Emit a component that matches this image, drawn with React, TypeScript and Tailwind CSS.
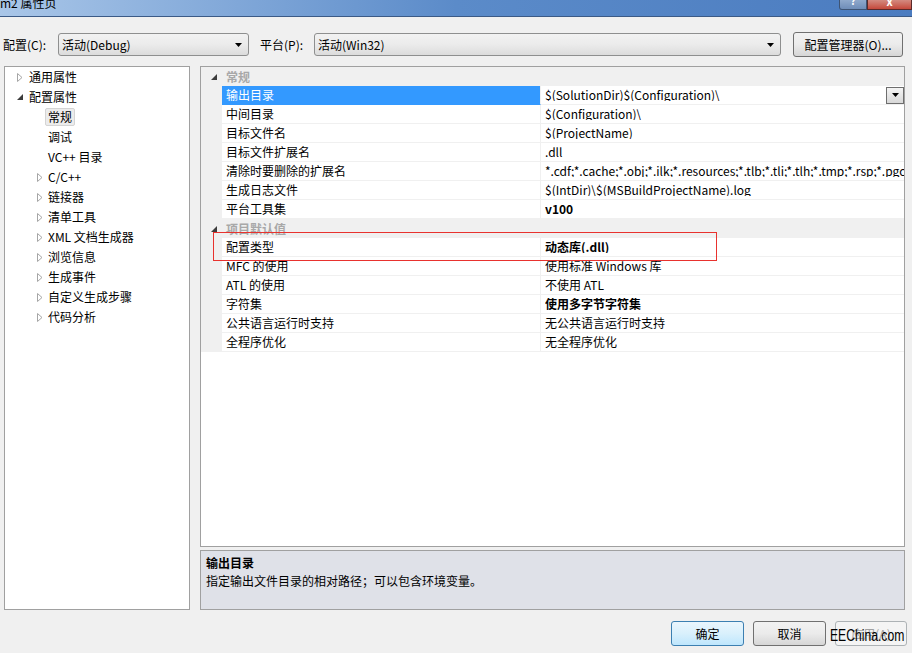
import React from "react";

const treeItems = [
  { label: "通用属性", level: 0, state: "closed" },
  { label: "配置属性", level: 0, state: "open" },
  { label: "常规", level: 1, state: "none", selected: true },
  { label: "调试", level: 1, state: "none" },
  { label: "VC++ 目录", level: 1, state: "none" },
  { label: "C/C++", level: 1, state: "closed" },
  { label: "链接器", level: 1, state: "closed" },
  { label: "清单工具", level: 1, state: "closed" },
  { label: "XML 文档生成器", level: 1, state: "closed" },
  { label: "浏览信息", level: 1, state: "closed" },
  { label: "生成事件", level: 1, state: "closed" },
  { label: "自定义生成步骤", level: 1, state: "closed" },
  { label: "代码分析", level: 1, state: "closed" },
];

type Row =
  | { kind: "cat"; name: string }
  | { kind: "prop"; name: string; value: string; bold?: boolean; active?: boolean };

const gridRows: Row[] = [
  { kind: "cat", name: "常规" },
  { kind: "prop", name: "输出目录", value: "$(SolutionDir)$(Configuration)\\", active: true },
  { kind: "prop", name: "中间目录", value: "$(Configuration)\\" },
  { kind: "prop", name: "目标文件名", value: "$(ProjectName)" },
  { kind: "prop", name: "目标文件扩展名", value: ".dll" },
  {
    kind: "prop",
    name: "清除时要删除的扩展名",
    value: "*.cdf;*.cache;*.obj;*.ilk;*.resources;*.tlb;*.tli;*.tlh;*.tmp;*.rsp;*.pgc;*.pgd;*.meta;$(TargetPath)",
  },
  { kind: "prop", name: "生成日志文件", value: "$(IntDir)\\$(MSBuildProjectName).log" },
  { kind: "prop", name: "平台工具集", value: "v100", bold: true },
  { kind: "cat", name: "项目默认值" },
  { kind: "prop", name: "配置类型", value: "动态库(.dll)", bold: true },
  { kind: "prop", name: "MFC 的使用", value: "使用标准 Windows 库" },
  { kind: "prop", name: "ATL 的使用", value: "不使用 ATL" },
  { kind: "prop", name: "字符集", value: "使用多字节字符集", bold: true },
  { kind: "prop", name: "公共语言运行时支持", value: "无公共语言运行时支持" },
  { kind: "prop", name: "全程序优化", value: "无全程序优化" },
];

function ClosedArrow() {
  return (
    <svg width="6" height="9" viewBox="0 0 6 9">
      <polygon points="0.5,0.5 5,4.5 0.5,8.5" fill="white" stroke="#a6a6a6" />
    </svg>
  );
}

function OpenArrow() {
  return (
    <svg width="6" height="6" viewBox="0 0 6 6">
      <polygon points="6,0 6,6 0,6" fill="#3c3c3c" />
    </svg>
  );
}

function DownArrow() {
  return (
    <svg width="7" height="4" viewBox="0 0 7 4">
      <polygon points="0,0 7,0 3.5,4" fill="#000" />
    </svg>
  );
}

function Combo({ text, width }: { text: string; width: string }) {
  return (
    <div
      className={`${width} h-[23px] flex items-center justify-between rounded-[3px] border border-[#8e8f8f] bg-gradient-to-b from-[#f2f2f2] via-[#ebebeb] to-[#dcdcdc] pl-[3px] pr-[6px]`}
    >
      <span>{text}</span>
      <DownArrow />
    </div>
  );
}

export default function App() {
  return (
    <div
      className="relative w-[912px] h-[653px] overflow-hidden bg-[#f0f0f0] text-[12px] text-black leading-none"
      style={{ fontFamily: '"Noto Sans CJK SC", "Noto Sans", sans-serif' }}
    >
      {/* title bar */}
      <div className="h-[17px] flex items-start justify-between bg-gradient-to-r from-[#a9c6e8] via-[#5b8bc9] to-[#4b7cc0] border-b border-[#3b5a86]">
        <div className="-mt-[3px] text-[12px] text-black">m2 属性页</div>
        <div className="flex">
          <div className="w-[28px] h-[10px] rounded-bl-[3px] border border-t-0 border-[#3e5474] bg-gradient-to-b from-[#8fa9cc] to-[#6f8db8] flex items-start justify-center text-white text-[10px] font-bold">
            <span className="-mt-[4px]">?</span>
          </div>
          <div className="w-[45px] h-[10px] border border-t-0 border-[#5a2a2a] bg-gradient-to-b from-[#d38a80] to-[#c4473b] flex items-start justify-center text-white text-[11px] font-bold">
            <span className="-mt-[4px]">x</span>
          </div>
        </div>
      </div>

      {/* configuration toolbar */}
      <div className="mt-[15px] flex items-center h-[25px] pl-[3px]">
        <span className="w-[55px]">配置(C):</span>
        <Combo text="活动(Debug)" width="w-[191px]" />
        <span className="ml-[11px] w-[54px]">平台(P):</span>
        <Combo text="活动(Win32)" width="w-[467px]" />
        <div className="ml-[12px] w-[110px] h-[25px] flex items-center justify-center rounded-[3px] border border-[#707070] bg-gradient-to-b from-[#f2f2f2] via-[#ebebeb] to-[#d6d6d6]">
          配置管理器(O)...
        </div>
      </div>

      {/* main area */}
      <div className="mt-[9px] flex h-[544px] pl-[4px]">
        {/* tree */}
        <div className="w-[186px] border border-[#a0a0a0] bg-white">
          {treeItems.map((it) => (
            <div key={it.label} className="h-[20px] flex items-center">
              <div className={`${it.level === 0 ? "w-[24px] pl-[12px]" : "w-[40px] pl-[32px]"} flex items-center`}>
                {it.state === "closed" && <ClosedArrow />}
                {it.state === "open" && <OpenArrow />}
              </div>
              {it.selected ? (
                <span className="h-[18px] flex items-center rounded-[2px] border border-[#d4d4d4] bg-[#ececec] px-[2px]">
                  {it.label}
                </span>
              ) : (
                <span className={it.level === 0 ? "" : "pl-[3px]"}>{it.label}</span>
              )}
            </div>
          ))}
        </div>

        {/* property grid + description */}
        <div className="ml-[10px] w-[705px] flex flex-col">
          <div className="flex-1 border border-[#a0a0a0] bg-white">
            {gridRows.map((r) =>
              r.kind === "cat" ? (
                <div key={r.name} className="h-[19px] flex items-center bg-[#f0f0f0]">
                  <div className="w-[21px] flex items-center justify-end pr-[5px]">
                    <OpenArrow />
                  </div>
                  <span className="pl-[4px] font-bold text-[#a8a8a8]">{r.name}</span>
                </div>
              ) : (
                <div key={r.name} className="h-[19px] flex">
                  <div className="w-[21px] bg-[#f0f0f0]" />
                  <div
                    className={`w-[319px] flex items-center pl-[4px] border-b border-r ${
                      r.active ? "bg-[#3399ff] text-white border-b-[#3399ff] border-r-[#f0f0f0]" : "border-[#f0f0f0]"
                    }`}
                  >
                    {r.name}
                  </div>
                  <div
                    className={`flex-1 min-w-0 flex items-center pl-[4px] border-b border-[#f0f0f0] overflow-hidden whitespace-nowrap ${
                      r.bold ? "font-bold" : ""
                    }`}
                  >
                    <span className="flex-1 min-w-0 overflow-hidden">{r.value}</span>
                    {r.active && (
                      <div className="w-[18px] h-[17px] flex items-center justify-center border border-[#6e6e6e] bg-gradient-to-b from-[#f4f4f4] to-[#d8d8d8]">
                        <DownArrow />
                      </div>
                    )}
                  </div>
                </div>
              )
            )}
          </div>
          <div className="mt-[3px] h-[60px] border border-[#a0a0a0] bg-[#dfe1e8] pl-[5px] pt-[6px]">
            <div className="font-bold">输出目录</div>
            <div className="mt-[6px]">指定输出文件目录的相对路径；可以包含环境变量。</div>
          </div>
        </div>
      </div>

      {/* dialog buttons */}
      <div className="mt-[11px] flex justify-end pr-[5px] gap-[9px]">
        <div className="w-[73px] h-[25px] flex items-center justify-center rounded-[3px] border border-[#3c7fb1] bg-gradient-to-b from-[#eaf6fd] via-[#d9f0fc] to-[#bee6fd]">
          确定
        </div>
        <div className="w-[73px] h-[25px] flex items-center justify-center rounded-[3px] border border-[#707070] bg-gradient-to-b from-[#f2f2f2] via-[#ebebeb] to-[#d6d6d6]">
          取消
        </div>
        <div className="w-[72px] h-[25px] flex items-center justify-center rounded-[3px] border border-[#adb2b5] bg-[#f4f4f4] text-[#a0a0a0]">
          应用(A)
        </div>
      </div>

      {/* red highlight box */}
      <div className="absolute left-[213px] top-[232px] w-[504px] h-[29px] border border-[#e8322e]" />

      {/* watermark */}
      <div
        className="absolute left-[830px] top-[628px] text-[16px] text-black origin-left scale-x-[0.76]"
        style={{ fontFamily: '"Liberation Sans", Arial, sans-serif' }}
      >
        EEChina.com
      </div>
    </div>
  );
}
